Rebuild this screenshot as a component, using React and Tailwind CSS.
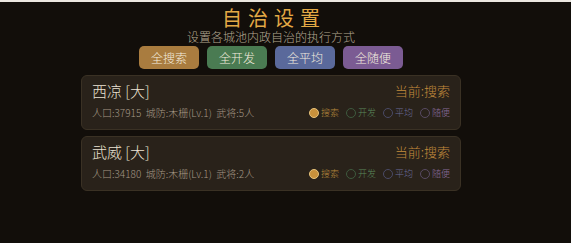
import React from "react";

const cities = [
  { name: "西凉 [大]", pop: 37915, gen: 5 },
  { name: "武威 [大]", pop: 34180, gen: 2 },
];

const opts = [
  { label: "搜索", ring: "border-[#e6c27a]", fill: "bg-[#c8913c]", text: "text-[#b98a3c]", on: true },
  { label: "开发", ring: "border-[#3e5a3e]", fill: "bg-transparent", text: "text-[#5b8a5b]" },
  { label: "平均", ring: "border-[#4a4a66]", fill: "bg-transparent", text: "text-[#6a6c9a]" },
  { label: "随便", ring: "border-[#584a62]", fill: "bg-transparent", text: "text-[#8a6c9c]" },
];

function Card({ c }) {
  return (
    <div className="rounded-[6px] border border-[#3a3124] bg-[#29221a] pl-[10px] pr-[10px] pt-[5px] pb-[9px]">
      <div className="flex items-center justify-between">
        <div className="text-[15px] leading-[20px] text-[#ece4d4]">{c.name}</div>
        <div className="text-[13px] leading-[20px] text-[#c48c3c]">当前:搜索</div>
      </div>
      <div className="mt-[5px] flex items-center justify-between">
        <div className="text-[10px] leading-[14px] text-[#a49886] whitespace-pre">
          {`人口:${c.pop}  城防:木栅(Lv.1)  武将:${c.gen}人`}
        </div>
        <div className="flex items-center gap-[7px]">
          {opts.map((o) => (
            <div key={o.label} className="flex items-center gap-[2px]">
              <span className={`block h-[10px] w-[10px] rounded-full border ${o.ring} ${o.fill}`} />
              <span className={`text-[9px] leading-[12px] ${o.text}`}>{o.label}</span>
            </div>
          ))}
        </div>
      </div>
    </div>
  );
}

export default function App() {
  const btns = [
    { t: "全搜索", c: "bg-[#a97c3f]" },
    { t: "全开发", c: "bg-[#4a7b52]" },
    { t: "全平均", c: "bg-[#5a699b]" },
    { t: "全随便", c: "bg-[#7b5b93]" },
  ];
  return (
    <div
      className="h-[243px] w-[571px] overflow-hidden border-t-[2px] border-[#ebe7e0] bg-[#120e0a] font-light"
      style={{ fontFamily: '"Noto Sans CJK SC", "Noto Sans", sans-serif' }}
    >
      <div className="ml-[81px] flex w-[380px] flex-col items-center">
        <div className="mt-[5px] pl-[6px] text-[20px] leading-[22px] tracking-[6px] text-[#e3a945] font-normal">自治设置</div>
        <div className="mt-[1px] text-[12px] leading-[14px] text-[#b3a792]">设置各城池内政自治的执行方式</div>
        <div className="mt-[2px] flex gap-[8px]">
          {btns.map((b) => (
            <div
              key={b.t}
              className={`flex h-[23px] w-[60px] items-center justify-center rounded-[5px] text-[12px] text-[#f3ecdf] ${b.c}`}
            >
              {b.t}
            </div>
          ))}
        </div>
        <div className="mt-[6px] flex w-full flex-col gap-[6px]">
          {cities.map((c) => (
            <Card key={c.name} c={c} />
          ))}
        </div>
      </div>
    </div>
  );
}
